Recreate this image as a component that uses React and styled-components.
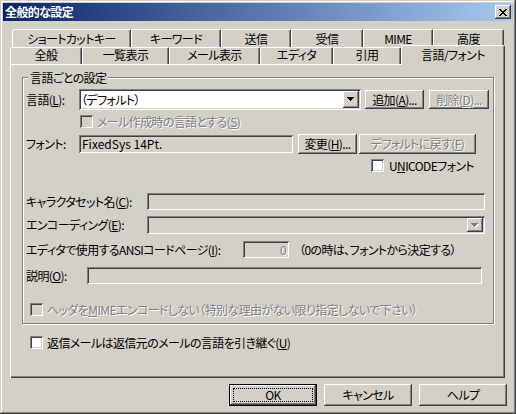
import React from "react";
import styled, { createGlobalStyle, css } from "styled-components";

const face = "#d4d0c8";
const shadow = "#808080";
const dark = "#404040";
const hi = "#ffffff";

const GlobalStyle = createGlobalStyle`
  html, body { margin: 0; padding: 0; background: ${face}; }
  body { overflow: hidden; }
`;

const raised = css`
  box-shadow: inset -1px -1px ${dark}, inset 1px 1px ${hi},
    inset -2px -2px ${shadow}, inset 2px 2px ${face};
`;

const sunken = css`
  box-shadow: inset 1px 1px ${shadow}, inset -1px -1px ${hi},
    inset 2px 2px ${dark}, inset -2px -2px ${face};
`;

const disabledText = css`
  color: ${shadow};
  text-shadow: 1px 1px 0 ${hi};
`;

const Window = styled.div`
  width: 516px;
  height: 414px;
  box-sizing: border-box;
  padding: 3px;
  background: ${face};
  box-shadow: inset -1px -1px ${dark}, inset 1px 1px ${face},
    inset -2px -2px ${shadow}, inset 2px 2px ${hi};
  display: flex;
  flex-direction: column;
  font-family: "Noto Sans CJK JP", "Liberation Sans", sans-serif;
  font-size: 12px;
  line-height: 14px;
  letter-spacing: -0.6px;
  color: #000;
  font-feature-settings: "palt" 1;
`;

const TitleBar = styled.div`
  height: 18px;
  flex-shrink: 0;
  display: flex;
  align-items: center;
  justify-content: space-between;
  padding: 0 2px;
  background: linear-gradient(to right, #0a246a, #a6caf0);
`;

const TitleText = styled.span`
  color: #fff;
  font-weight: bold;
`;

const CloseBox = styled.div`
  width: 16px;
  height: 14px;
  box-sizing: border-box;
  background: ${face};
  ${raised};
  display: flex;
  align-items: center;
  justify-content: center;
`;

const Body = styled.div`
  display: flex;
  flex-direction: column;
  padding: 8px 6px 0 7px;
`;

const TabStrip = styled.div`
  display: flex;
  flex-direction: column;
  width: 495px;
`;

const TabRow = styled.div`
  display: flex;
  align-items: flex-start;
  height: ${(p) => p.$h}px;
  padding-left: ${(p) => p.$indent}px;
`;

const Tab = styled.div`
  box-sizing: border-box;
  flex-shrink: 0;
  width: ${(p) => p.$w}px;
  height: ${(p) => (p.$active ? 20 : p.$h)}px;
  margin-top: ${(p) => (p.$active ? -2 : 0)}px;
  padding-top: ${(p) => p.$pt}px;
  border-top: 1px solid ${hi};
  border-left: 1px solid ${hi};
  border-right: 1px solid ${dark};
  border-radius: 2px 2px 0 0;
  box-shadow: inset -1px 0 ${shadow};
  background: ${face};
  text-align: center;
  white-space: nowrap;
  position: relative;
  z-index: ${(p) => (p.$active ? 1 : 0)};
`;

const Panel = styled.div`
  width: 495px;
  height: 314px;
  box-sizing: border-box;
  padding: 13px 0 0 12px;
  box-shadow: inset 1px 1px ${hi}, inset -1px -1px ${dark},
    inset -2px -2px ${shadow};
  display: flex;
  flex-direction: column;
`;

const Group = styled.div`
  position: relative;
  width: 472px;
  height: 247px;
  box-sizing: border-box;
  border: 1px solid ${shadow};
  box-shadow: inset 1px 1px ${hi}, 1px 1px ${hi};
  padding-left: 3px;
  display: flex;
  flex-direction: column;
`;

const GroupLabel = styled.span`
  position: absolute;
  top: -7px;
  left: 5px;
  padding: 0 2px;
  background: ${face};
`;

const Row = styled.div`
  display: flex;
  align-items: center;
  flex-shrink: 0;
  height: ${(p) => p.$h}px;
  margin-top: ${(p) => p.$mt}px;
  padding-left: ${(p) => p.$pl || 0}px;
`;

const Label = styled.span`
  width: ${(p) => p.$w}px;
  flex-shrink: 0;
  white-space: nowrap;
`;

const Field = styled.div`
  width: ${(p) => p.$w}px;
  height: ${(p) => p.$h}px;
  box-sizing: border-box;
  flex-shrink: 0;
  background: ${(p) => (p.$white ? hi : face)};
  ${sunken};
  display: flex;
  align-items: center;
  justify-content: ${(p) => (p.$right ? "flex-end" : "flex-start")};
  padding: ${(p) => (p.$combo ? "2px" : "0 3px")};
  white-space: nowrap;
  letter-spacing: ${(p) => (p.$latin ? 0 : -0.6)}px;
  ${(p) => p.$dim && disabledText};
`;

const ComboText = styled.span`
  flex: 1;
`;

const DropButton = styled.div`
  width: 16px;
  align-self: stretch;
  box-sizing: border-box;
  background: ${face};
  ${raised};
  display: flex;
  align-items: center;
  justify-content: center;
`;

const Button = styled.div`
  width: ${(p) => p.$w}px;
  height: ${(p) => p.$h}px;
  margin-left: ${(p) => p.$ml || 0}px;
  box-sizing: border-box;
  flex-shrink: 0;
  background: ${face};
  ${raised};
  display: flex;
  align-items: center;
  justify-content: center;
  white-space: nowrap;
  ${(p) => p.$disabled && disabledText};
`;

const DefaultButton = styled.div`
  width: ${(p) => p.$w}px;
  height: ${(p) => p.$h}px;
  box-sizing: border-box;
  border: 1px solid #000;
  display: flex;
`;

const DefaultFace = styled.div`
  flex: 1;
  display: flex;
  padding: 3px;
  background: ${face};
  ${raised};
`;

const FocusRing = styled.div`
  flex: 1;
  border: 1px dotted #000;
  display: flex;
  align-items: center;
  justify-content: center;
`;

const Check = styled.div`
  display: flex;
  align-items: center;
  gap: ${(p) => p.$gap || 4}px;
  margin-left: ${(p) => p.$ml || 0}px;
  white-space: nowrap;
  ${(p) => p.$disabled && disabledText};
`;

const Box = styled.span`
  width: 13px;
  height: 13px;
  box-sizing: border-box;
  flex-shrink: 0;
  background: ${(p) => (p.$disabled ? face : hi)};
  ${sunken};
`;

const Note = styled.span`
  margin-left: 10px;
  white-space: nowrap;
`;

const ButtonBar = styled.div`
  display: flex;
  justify-content: flex-end;
  gap: 7px;
  margin-top: 6px;
`;

const Key = styled.u`
  text-underline-offset: 1px;
`;

function Arrow({ dim }) {
  return (
    <svg width="8" height="5" viewBox="0 0 8 5" shapeRendering="crispEdges">
      {dim && <path d="M1 1h7v1H1zM2 2h5v1H2zM3 3h3v1H3zM4 4h1v1H4z" fill="#fff" />}
      <path d="M0 0h7v1H0zM1 1h5v1H1zM2 2h3v1H2zM3 3h1v1H3z" fill={dim ? shadow : "#000"} />
    </svg>
  );
}

function CloseGlyph() {
  return (
    <svg width="8" height="7" viewBox="0 0 8 7" shapeRendering="crispEdges">
      <path
        d="M0 0h2v1H0zM6 0h2v1H6zM1 1h2v1H1zM5 1h2v1H5zM2 2h4v1H2zM3 3h2v1H3zM2 4h4v1H2zM1 5h2v1H1zM5 5h2v1H5zM0 6h2v1H0zM6 6h2v1H6z"
        fill="#000"
      />
    </svg>
  );
}

const backTabs = [
  ["ショートカットキー", 119],
  ["キーワード", 90],
  ["送信", 70],
  ["受信", 72],
  ["MIME", 70],
  ["高度", 71],
];

const frontTabs = [
  ["全般", 72],
  ["一覧表示", 87],
  ["メール表示", 91],
  ["エディタ", 73],
  ["引用", 68],
  ["言語/フォント", 104, true],
];

export default function App() {
  return (
    <>
      <GlobalStyle />
      <Window>
        <TitleBar>
          <TitleText>全般的な設定</TitleText>
          <CloseBox>
            <CloseGlyph />
          </CloseBox>
        </TitleBar>
        <Body>
          <TabStrip>
            <TabRow $h={18} $indent={2}>
              {backTabs.map(([t, w]) => (
                <Tab key={t} $w={w} $h={18} $pt={2}>
                  {t}
                </Tab>
              ))}
            </TabRow>
            <TabRow $h={17} $indent={0}>
              {frontTabs.map(([t, w, active]) => (
                <Tab key={t} $w={w} $h={17} $pt={active ? 2 : 0} $active={active}>
                  {t}
                </Tab>
              ))}
            </TabRow>
          </TabStrip>
          <Panel>
            <Group>
              <GroupLabel>言語ごとの設定</GroupLabel>
              <Row $h={21} $mt={11}>
                <Label $w={53}>
                  言語(<Key>L</Key>):
                </Label>
                <Field $w={282} $h={21} $white $combo>
                  <ComboText>（デフォルト）</ComboText>
                  <DropButton>
                    <Arrow />
                  </DropButton>
                </Field>
                <Button $w={59} $h={19} $ml={4}>
                  <span>
                    追加(<Key>A</Key>)...
                  </span>
                </Button>
                <Button $w={60} $h={19} $ml={5} $disabled>
                  <span>
                    削除(<Key>D</Key>)...
                  </span>
                </Button>
              </Row>
              <Row $h={13} $mt={5} $pl={54}>
                <Check $disabled>
                  <Box $disabled />
                  <span>
                    メール作成時の言語とする(<Key>S</Key>)
                  </span>
                </Check>
              </Row>
              <Row $h={20} $mt={6}>
                <Label $w={53}>フォント:</Label>
                <Field $w={214} $h={18} $latin>
                  FixedSys 14Pt.
                </Field>
                <Button $w={59} $h={20} $ml={5}>
                  <span>
                    変更(<Key>H</Key>)...
                  </span>
                </Button>
                <Button $w={117} $h={20} $ml={2} $disabled>
                  <span>
                    デフォルトに戻す(<Key>F</Key>)
                  </span>
                </Button>
              </Row>
              <Row $h={13} $mt={5} $pl={345}>
                <Check $gap={5}>
                  <Box />
                  <span>
                    U<Key>N</Key>ICODEフォント
                  </span>
                </Check>
              </Row>
              <Row $h={17} $mt={21}>
                <Label $w={121}>
                  キャラクタセット名(<Key>C</Key>):
                </Label>
                <Field $w={338} $h={17} />
              </Row>
              <Row $h={18} $mt={6}>
                <Label $w={121}>
                  エンコーディング(<Key>E</Key>):
                </Label>
                <Field $w={338} $h={18} $combo>
                  <ComboText />
                  <DropButton>
                    <Arrow dim />
                  </DropButton>
                </Field>
              </Row>
              <Row $h={17} $mt={7}>
                <Label $w={217}>
                  エディタで使用するANSIコードページ(<Key>I</Key>):
                </Label>
                <Field $w={46} $h={17} $right $dim>
                  0
                </Field>
                <Note>（0の時は、フォントから決定する）</Note>
              </Row>
              <Row $h={17} $mt={9}>
                <Label $w={61}>
                  説明(<Key>O</Key>):
                </Label>
                <Field $w={395} $h={17} />
              </Row>
              <Row $h={13} $mt={19} $pl={4}>
                <Check $disabled>
                  <Box $disabled />
                  <span>
                    ヘッダを<Key>M</Key>IMEエンコードしない（特別な理由がない限り指定しないで下さい）
                  </span>
                </Check>
              </Row>
            </Group>
            <Row $h={13} $mt={12}>
              <Check $ml={8}>
                <Box />
                <span>
                  返信メールは返信元のメールの言語を引き継ぐ(<Key>U</Key>)
                </span>
              </Check>
            </Row>
          </Panel>
          <ButtonBar>
            <DefaultButton $w={88} $h={22}>
              <DefaultFace>
                <FocusRing>OK</FocusRing>
              </DefaultFace>
            </DefaultButton>
            <Button $w={88} $h={22}>
              キャンセル
            </Button>
            <Button $w={88} $h={22}>
              ヘルプ
            </Button>
          </ButtonBar>
        </Body>
      </Window>
    </>
  );
}
